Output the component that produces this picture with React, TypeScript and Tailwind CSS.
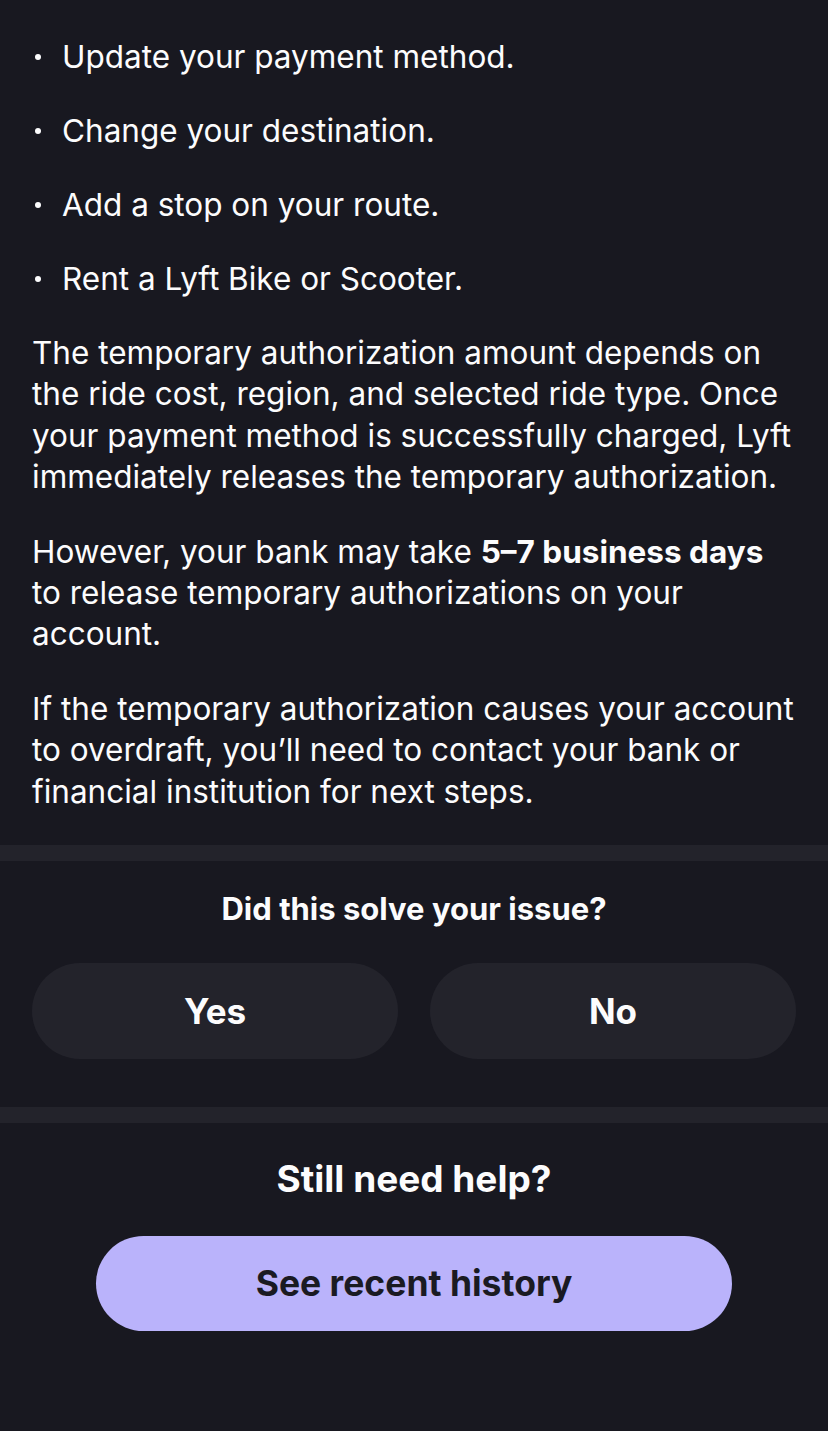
import React from "react";

export default function App() {
  const bullets = [
    "Update your payment method.",
    "Change your destination.",
    "Add a stop on your route.",
    "Rent a Lyft Bike or Scooter.",
  ];
  return (
    <div
      className="w-[828px] h-[1431px] bg-[#181820] text-[#fcfcfd] overflow-hidden"
      style={{ fontFamily: "Inter, 'Noto Sans', sans-serif" }}
    >
      <div className="px-8 pt-[36px]">
        <ul className="flex flex-col gap-[33px]">
          {bullets.map((b) => (
            <li key={b} className="flex items-center text-[31.5px] leading-[41px]">
              <span className="w-[30px] flex justify-start pl-[3px]">
                <span className="block w-[6px] h-[6px] rounded-full bg-[#fcfcfd]" />
              </span>
              <span>{b}</span>
            </li>
          ))}
        </ul>
        <div className="mt-[33px] flex flex-col gap-[33px] text-[31.5px] leading-[41.4px]">
          <p>
            The temporary authorization amount depends on the ride cost, region, and selected ride
            type. Once your payment method is successfully charged, Lyft immediately releases the
            temporary authorization.
          </p>
          <p>
            However, your bank may take <span className="font-bold">5–7 business days</span> to
            release temporary authorizations on your account.
          </p>
          <p>
            If the temporary authorization causes your account to overdraft, you’ll need to contact
            your bank or financial institution for next steps.
          </p>
        </div>
      </div>

      <div className="mt-[33px] h-4 bg-[#23232b]" />

      <div className="px-8 pt-[30px] pb-[48px] flex flex-col items-center">
        <div className="text-[31px] leading-[36px] font-bold">Did this solve your issue?</div>
        <div className="mt-[36px] w-full grid grid-cols-2 gap-8">
          <button className="h-[96px] rounded-full bg-[#23232b] text-[35px] font-bold text-[#fcfcfd]">
            Yes
          </button>
          <button className="h-[96px] rounded-full bg-[#23232b] text-[35px] font-bold text-[#fcfcfd]">
            No
          </button>
        </div>
      </div>

      <div className="h-4 bg-[#23232b]" />

      <div className="pt-[33px] flex flex-col items-center">
        <div className="text-[37px] leading-[46px] font-bold">Still need help?</div>
        <button className="mt-[34px] w-[636px] h-[95px] rounded-full bg-[#bab3fb] text-[35.5px] font-bold text-[#1a1a22]">
          See recent history
        </button>
      </div>
    </div>
  );
}
